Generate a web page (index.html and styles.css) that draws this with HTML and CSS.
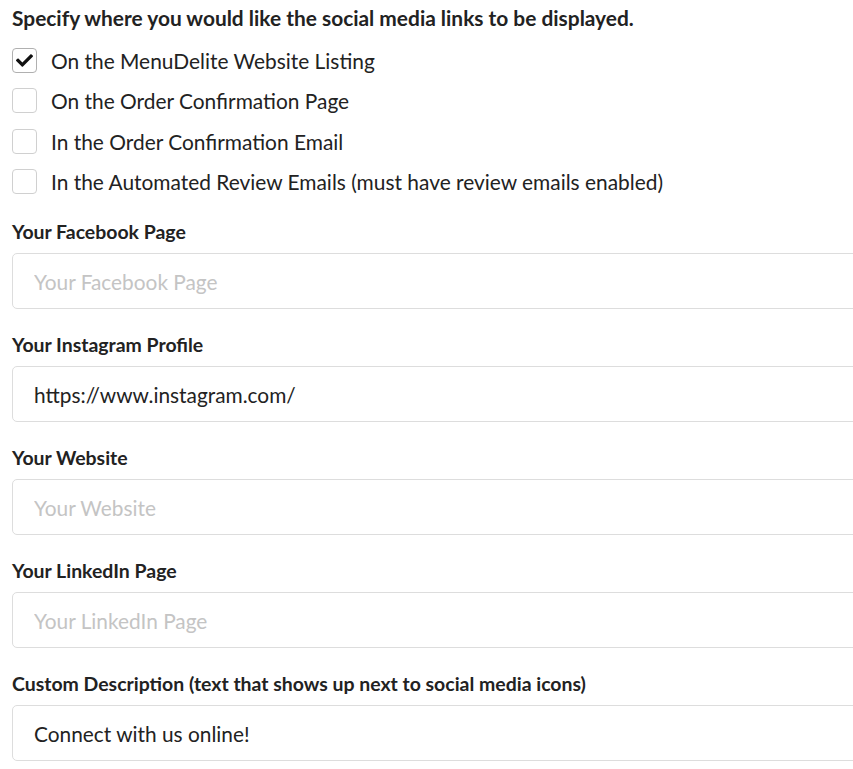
FILE: index.html
```html
<!DOCTYPE html>
<html>
<head>
<meta charset="utf-8">
<link rel="stylesheet" href="styles.css">
</head>
<body>
<div class="form">
  <div class="heading">Specify where you would like the social media links to be displayed.</div>
  <div class="checks">
    <label class="check"><span class="box checked"><svg viewBox="0 0 512 512" width="17" height="17"><path fill="#111" d="M173.898 439.404l-166.4-166.4c-9.997-9.997-9.997-26.206 0-36.204l36.203-36.204c9.997-9.998 26.207-9.998 36.204 0L192 312.69 432.095 72.596c9.997-9.997 26.207-9.997 36.204 0l36.203 36.204c9.997 9.997 9.997 26.206 0 36.204l-294.4 294.401c-9.998 9.997-26.207 9.997-36.204-.001z"/></svg></span><span>On the MenuDelite Website Listing</span></label>
    <label class="check"><span class="box"></span><span>On the Order Confirmation Page</span></label>
    <label class="check"><span class="box"></span><span>In the Order Confirmation Email</span></label>
    <label class="check"><span class="box"></span><span>In the Automated Review Emails (must have review emails enabled)</span></label>
  </div>
  <div class="field">
    <div class="label">Your Facebook Page</div>
    <input class="input" type="text" placeholder="Your Facebook Page">
  </div>
  <div class="field">
    <div class="label">Your Instagram Profile</div>
    <input class="input" type="text" value="https://www.instagram.com/">
  </div>
  <div class="field">
    <div class="label">Your Website</div>
    <input class="input" type="text" placeholder="Your Website">
  </div>
  <div class="field">
    <div class="label">Your LinkedIn Page</div>
    <input class="input" type="text" placeholder="Your LinkedIn Page">
  </div>
  <div class="field">
    <div class="label">Custom Description (text that shows up next to social media icons)</div>
    <input class="input" type="text" value="Connect with us online!">
  </div>
</div>
</body>
</html>
```
FILE: styles.css
```css
html, body {
  margin: 0;
  padding: 0;
  background: #fff;
  overflow: hidden;
}
body {
  font-family: Lato, "Open Sans", sans-serif;
  color: #222;
}
.form {
  padding: 5px 0 0 12px;
  width: 860px;
}
.heading {
  font-weight: 700;
  font-size: 20.9px;
  line-height: 26px;
  color: #222;
}
.checks {
  display: flex;
  flex-direction: column;
  gap: 15.33px;
  margin-top: 17px;
}
.check {
  display: flex;
  align-items: center;
  gap: 14px;
  font-size: 20.9px;
  line-height: 25px;
  color: #222;
}
.box {
  box-sizing: border-box;
  width: 25px;
  height: 25px;
  border: 1px solid #d0d0d0;
  border-radius: 4px;
  display: flex;
  align-items: center;
  justify-content: center;
  flex: none;
}
.box.checked {
  border-color: #b0b0b0;
}
.field {
  display: flex;
  flex-direction: column;
  margin-top: 26px;
}
.field + .field {
  margin-top: 24px;
}
.label {
  font-weight: 700;
  font-size: 19.45px;
  line-height: 24px;
  color: #222;
  margin-bottom: 9px;
}
.input {
  box-sizing: border-box;
  height: 56px;
  width: 860px;
  border: 1px solid #ddd;
  border-radius: 5px;
  padding: 2px 21px 0;
  font-family: Lato, sans-serif;
  font-size: 20.85px;
  color: #222;
  outline: none;
  background: #fff;
}
.input::placeholder {
  color: #c4c4c4;
}
```
